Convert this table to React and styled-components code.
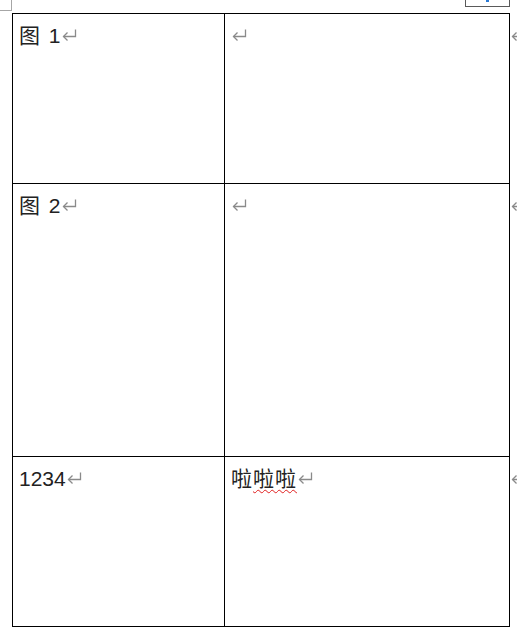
import React from "react";
import styled, { createGlobalStyle } from "styled-components";

const GlobalStyle = createGlobalStyle`
  html, body {
    margin: 0;
    padding: 0;
    background: #fff;
    overflow: hidden;
  }
  body {
    font-family: "Liberation Sans", "Noto Sans CJK SC", sans-serif;
  }
`;

const rows = [
  { left: "图 1", right: "", height: 170 },
  { left: "图 2", right: "", height: 273 },
  { left: "1234", right: "啦啦啦", height: 170, squiggle: true },
];

function ReturnMark() {
  return (
    <Mark width="15" height="13" viewBox="0 0 15 13">
      <path d="M1.5 8.5 H13.5 V1.5" fill="none" stroke="#8a8a8a" strokeWidth="1.3" />
      <path d="M5.5 4.5 L1.5 8.5 L5.5 12.5" fill="none" stroke="#8a8a8a" strokeWidth="1.3" />
    </Mark>
  );
}

export default function App() {
  return (
    <>
      <GlobalStyle />
      <Page>
        <TopStrip>
          <CropMark />
          <FrameStub>
            <BlueDot />
          </FrameStub>
        </TopStrip>
        <Table>
          <colgroup>
            <col style={{ width: 212 }} />
            <col style={{ width: 285 }} />
            <col style={{ width: 20 }} />
          </colgroup>
          <tbody>
            {rows.map((r, i) => (
              <Row key={i} $h={r.height}>
                <Cell>
                  <CellText>
                    {r.left}
                    <ReturnMark />
                  </CellText>
                </Cell>
                <Cell>
                  <CellText>
                    {r.squiggle ? (
                      <>
                        <Cjk>啦</Cjk>
                        <Squiggle>
                          <Cjk>啦啦</Cjk>
                        </Squiggle>
                      </>
                    ) : (
                      r.right
                    )}
                    <ReturnMark />
                  </CellText>
                </Cell>
                <EndCell>
                  <CellText>
                    <ReturnMark />
                  </CellText>
                </EndCell>
              </Row>
            ))}
          </tbody>
        </Table>
      </Page>
    </>
  );
}

const Page = styled.div`
  width: 517px;
  height: 636px;
  overflow: hidden;
  position: relative;
`;

const TopStrip = styled.div`
  display: flex;
  justify-content: space-between;
  align-items: flex-start;
  height: 13px;
  padding-right: 7px;
`;

const CropMark = styled.div`
  width: 11px;
  height: 10px;
  border-right: 1px solid #a6a6a6;
  border-bottom: 1px solid #a6a6a6;
`;

const FrameStub = styled.div`
  position: relative;
  width: 43px;
  height: 7px;
  margin-top: -1px;
  border: 1px solid #5a5a5a;
  border-top: none;
`;

const BlueDot = styled.div`
  position: absolute;
  left: 20px;
  top: 0;
  width: 3px;
  height: 3px;
  background: #2a7ad5;
`;

const Table = styled.table`
  margin-left: 12px;
  border-collapse: collapse;
  table-layout: fixed;
  width: 517px;
`;

const Row = styled.tr`
  height: ${(p) => p.$h}px;
`;

const Cell = styled.td`
  border: 1px solid #000;
  vertical-align: top;
  padding: 7px 0 0 6px;
  font-size: 21px;
  color: #222;
`;

const EndCell = styled.td`
  vertical-align: top;
  padding: 7px 0 0 0;
`;

const CellText = styled.div`
  display: flex;
  align-items: baseline;
  min-height: 30px;
  line-height: 30px;
  white-space: pre;
  word-spacing: 3px;
`;

const Cjk = styled.span`
  letter-spacing: 1px;
`;

const Squiggle = styled.span`
  text-decoration: underline wavy #e02020;
  text-decoration-thickness: 1px;
  text-underline-offset: 3px;
`;

const Mark = styled.svg`
  flex: none;
  margin-left: 1px;
  align-self: center;
  margin-top: -3px;
  display: block;
`;
